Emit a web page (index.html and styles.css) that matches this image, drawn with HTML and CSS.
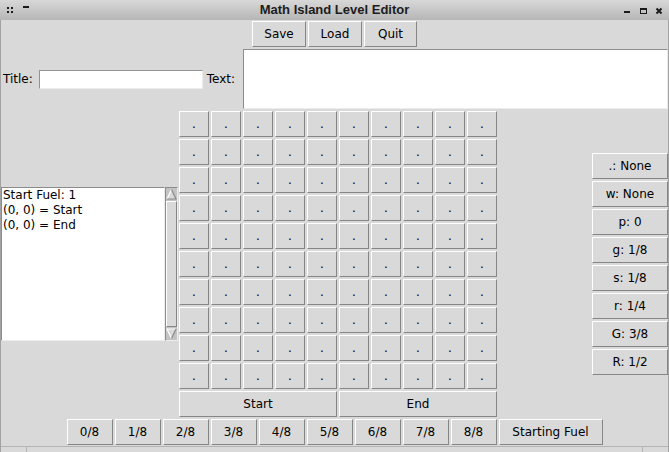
FILE: index.html
```html
<!DOCTYPE html>
<html>
<head>
<meta charset="utf-8">
<link rel="stylesheet" href="styles.css">
</head>
<body>
<div class="titlebar">
  <div class="tb-left">
    <svg width="35" height="20" viewBox="0 0 35 20">
      <rect x="7" y="7" width="2" height="2" fill="#1a1a1a"/>
      <rect x="11" y="7" width="2" height="2" fill="#1a1a1a"/>
      <rect x="7" y="11" width="2" height="2" fill="#1a1a1a"/>
      <rect x="11" y="11" width="2" height="2" fill="#1a1a1a"/>
      <rect x="23" y="6" width="6" height="2" fill="#1a1a1a"/>
    </svg>
  </div>
  <div class="tb-title">Math Island Level Editor</div>
  <div class="tb-right">
    <svg width="50" height="20" viewBox="0 0 50 20">
      <rect x="5" y="11" width="6" height="2" fill="#1a1a1a"/>
      <rect x="21.5" y="8.5" width="6" height="5" fill="none" stroke="#1a1a1a" stroke-width="1"/>
      <rect x="21" y="8" width="7" height="2" fill="#1a1a1a"/>
      <path d="M37.5 8.5 L42.5 13.5 M42.5 8.5 L37.5 13.5" stroke="#1a1a1a" stroke-width="2" fill="none"/>
    </svg>
  </div>
</div>
<div class="window">
  <div class="toolbar">
    <button class="btn btn-top w-save">Save</button>
    <button class="btn btn-top w-load">Load</button>
    <button class="btn btn-top w-quit">Quit</button>
  </div>
  <div class="meta-row">
    <span class="lbl lbl-title">Title:</span>
    <div class="entry"></div>
    <span class="lbl lbl-text">Text:</span>
    <div class="textarea"></div>
  </div>
  <div class="main">
    <div class="listframe">
      <div class="listbox">
        <div>Start Fuel: 1</div>
        <div>(0, 0) = Start</div>
        <div>(0, 0) = End</div>
      </div>
      <div class="scrollbar">
        <div class="arrow">
          <svg width="11" height="12" viewBox="0 0 11 12">
            <polygon points="5.5,1.5 10,11 1,11" fill="#d9d9d9"/>
            <path d="M1 11 L5.5 1.5" stroke="#ffffff" stroke-width="1.2" fill="none"/>
            <path d="M5.5 1.5 L10 11 L1 11" stroke="#8a8a8a" stroke-width="1.2" fill="none"/>
          </svg>
        </div>
        <div class="slider"></div>
        <div class="arrow">
          <svg width="11" height="12" viewBox="0 0 11 12">
            <polygon points="1,1 10,1 5.5,10.5" fill="#d9d9d9"/>
            <path d="M5.5 10.5 L1 1 L10 1" stroke="#ffffff" stroke-width="1.2" fill="none"/>
            <path d="M10 1 L5.5 10.5" stroke="#8a8a8a" stroke-width="1.2" fill="none"/>
          </svg>
        </div>
      </div>
    </div>
    <div class="board">
      <div class="grid" id="grid"></div>
      <div class="se-row">
        <button class="btn btn-wide">Start</button>
        <button class="btn btn-wide">End</button>
      </div>
    </div>
    <div class="spacer"></div>
    <div class="sidecol">
      <button class="btn btn-side">.: None</button>
      <button class="btn btn-side">w: None</button>
      <button class="btn btn-side">p: 0</button>
      <button class="btn btn-side">g: 1/8</button>
      <button class="btn btn-side">s: 1/8</button>
      <button class="btn btn-side">r: 1/4</button>
      <button class="btn btn-side">G: 3/8</button>
      <button class="btn btn-side">R: 1/2</button>
    </div>
  </div>
  <div class="fuel-row">
    <button class="btn btn-fuel">0/8</button>
    <button class="btn btn-fuel">1/8</button>
    <button class="btn btn-fuel">2/8</button>
    <button class="btn btn-fuel">3/8</button>
    <button class="btn btn-fuel">4/8</button>
    <button class="btn btn-fuel">5/8</button>
    <button class="btn btn-fuel">6/8</button>
    <button class="btn btn-fuel">7/8</button>
    <button class="btn btn-fuel">8/8</button>
    <button class="btn btn-start-fuel">Starting Fuel</button>
  </div>
  <div class="frame-bottom">
    <div class="grip grip-left"></div>
    <div class="grip-mid"></div>
    <div class="grip grip-right"></div>
  </div>
</div>
<script src="script.js"></script>
</body>
</html>
```

FILE: script.js
```js
var g = document.getElementById('grid');
for (var i = 0; i < 100; i++) {
  var b = document.createElement('button');
  b.className = 'btn btn-cell';
  b.textContent = '.';
  g.appendChild(b);
}
```

FILE: styles.css
```css
html, body {
  margin: 0;
  padding: 0;
}
body {
  width: 669px;
  height: 452px;
  overflow: hidden;
  background: #d9d9d9;
  font-family: "DejaVu Sans", sans-serif;
  font-size: 12px;
  color: #000;
}
.titlebar {
  height: 20px;
  display: grid;
  grid-template-columns: 1fr auto 1fr;
  align-items: center;
  background: linear-gradient(#d8d8d8, #b6b6b6);
}
.tb-left svg, .tb-right svg {
  display: block;
}
.tb-right {
  display: flex;
  justify-content: flex-end;
}
.tb-title {
  font-family: "Liberation Sans", sans-serif;
  font-weight: bold;
  font-size: 13px;
  color: #1c1c1c;
  line-height: 20px;
}
.window {
  height: 432px;
  border-left: 1px solid #a2a2a2;
  border-right: 1px solid #a2a2a2;
  display: flex;
  flex-direction: column;
}
.btn {
  box-sizing: border-box;
  margin: 1px;
  padding: 0;
  border: 1px solid;
  border-color: #ffffff #868686 #868686 #ffffff;
  background: #d9d9d9;
  font-family: "DejaVu Sans", sans-serif;
  font-size: 12px;
  color: #000;
  display: flex;
  align-items: center;
  justify-content: center;
  height: 26px;
}
.toolbar {
  height: 28px;
  display: flex;
  justify-content: center;
}
.w-save { width: 54px; }
.w-load { width: 54px; }
.w-quit { width: 53px; }
.meta-row {
  height: 62px;
  display: flex;
  align-items: center;
  padding-left: 2px;
}
.lbl {
  line-height: 14px;
}
.lbl-title {
  margin-right: 6px;
}
.entry {
  box-sizing: border-box;
  width: 164px;
  height: 19px;
  background: #fff;
  border: 1px solid;
  border-color: #939393 #ececec #ececec #939393;
}
.lbl-text {
  margin-left: 4px;
  margin-right: 8px;
}
.textarea {
  box-sizing: border-box;
  flex: 1;
  height: 60px;
  background: #fff;
  border: 1px solid;
  border-color: #8c8c8c #ececec #ececec #8c8c8c;
  margin-bottom: 1px;
}
.main {
  height: 308px;
  display: flex;
}
.listframe {
  align-self: center;
  width: 177px;
  height: 154px;
  display: flex;
}
.listbox {
  box-sizing: border-box;
  width: 164px;
  height: 154px;
  background: #fff;
  border: 1px solid;
  border-color: #8c8c8c #ececec #ececec #8c8c8c;
  padding: 0 1px;
  line-height: 15px;
  white-space: nowrap;
}
.scrollbar {
  box-sizing: border-box;
  width: 13px;
  height: 154px;
  background: #c3c3c3;
  border: 1px solid;
  border-color: #8c8c8c #ececec #ececec #8c8c8c;
  display: flex;
  flex-direction: column;
}
.arrow {
  height: 12px;
  display: flex;
  justify-content: center;
}
.arrow svg {
  display: block;
}
.slider {
  flex: 1;
  box-sizing: border-box;
  margin: 1px 0;
  background: #d9d9d9;
  border: 1px solid;
  border-color: #ffffff #868686 #868686 #ffffff;
}
.board {
  width: 320px;
  display: flex;
  flex-direction: column;
}
.grid {
  display: grid;
  grid-template-columns: repeat(10, 32px);
  grid-auto-rows: 28px;
}
.btn-cell {
  width: 30px;
}
.se-row {
  display: flex;
}
.btn-wide {
  width: 158px;
}
.spacer {
  flex: 1;
}
.sidecol {
  display: flex;
  flex-direction: column;
  justify-content: center;
  margin-right: -1px;
}
.btn-side {
  width: 76px;
}
.fuel-row {
  height: 28px;
  display: flex;
  justify-content: center;
}
.btn-fuel {
  width: 46px;
}
.btn-start-fuel {
  width: 104px;
}
.frame-bottom {
  flex: 1;
  display: flex;
  border-top: 1px solid #b4b4b4;
}
.grip {
  width: 25px;
}
.grip-left {
  border-right: 1px solid #b4b4b4;
}
.grip-mid {
  flex: 1;
}
.grip-right {
  border-left: 1px solid #b4b4b4;
}
```
